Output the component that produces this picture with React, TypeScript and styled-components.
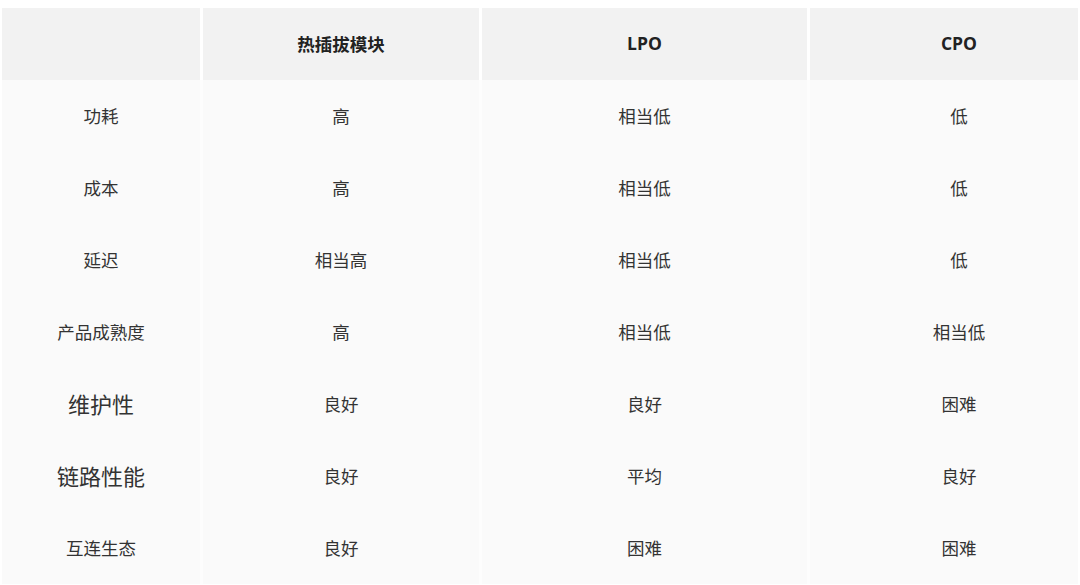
import React from 'react';
import styled, { createGlobalStyle } from 'styled-components';

const GlobalStyle = createGlobalStyle`
  html, body {
    margin: 0;
    padding: 0;
    background: #ffffff;
  }
  body {
    font-family: "Open Sans", "Noto Sans CJK SC", sans-serif;
    color: #333;
  }
`;

const Page = styled.div`
  padding: 8px 4px 0 2px;
`;

const columns = '198px 276px 325px 268px';

const HeaderRow = styled.div`
  display: grid;
  grid-template-columns: ${columns};
  column-gap: 3px;
  background: #ffffff;
`;

// the last column's text sits a bit right of the cell centre in the original
const HeaderCell = styled.div<{ $last?: boolean }>`
  height: 72px;
  box-sizing: border-box;
  padding: 0 0 2px ${(p) => (p.$last ? '30px' : '0')};
  display: flex;
  align-items: center;
  justify-content: center;
  background: #f2f2f2;
  font-size: 17.5px;
  font-weight: 700;
  color: #222;
`;

const Body = styled.div`
  display: grid;
  grid-template-columns: ${columns};
  column-gap: 3px;
  background: #fdfdfd;
`;

const Cell = styled.div<{ $large?: boolean; $last?: boolean }>`
  height: 72px;
  box-sizing: border-box;
  padding: 0 0 2px ${(p) => (p.$last ? '30px' : '0')};
  display: flex;
  align-items: center;
  justify-content: center;
  background: #fafafa;
  font-size: ${(p) => (p.$large ? '22px' : '17.5px')};
  color: #333;
`;

const headers = ['', '热插拔模块', 'LPO', 'CPO'];

const rows: { label: string; large?: boolean; values: string[] }[] = [
  { label: '功耗', values: ['高', '相当低', '低'] },
  { label: '成本', values: ['高', '相当低', '低'] },
  { label: '延迟', values: ['相当高', '相当低', '低'] },
  { label: '产品成熟度', values: ['高', '相当低', '相当低'] },
  { label: '维护性', large: true, values: ['良好', '良好', '困难'] },
  { label: '链路性能', large: true, values: ['良好', '平均', '良好'] },
  { label: '互连生态', values: ['良好', '困难', '困难'] },
];

const App: React.FC = () => (
  <>
    <GlobalStyle />
    <Page>
      <HeaderRow>
        {headers.map((h, i) => (
          <HeaderCell key={i} $last={i === headers.length - 1}>
            {h}
          </HeaderCell>
        ))}
      </HeaderRow>
      <Body>
        {rows.map((r) => (
          <React.Fragment key={r.label}>
            <Cell $large={r.large}>{r.label}</Cell>
            {r.values.map((v, i) => (
              <Cell key={i} $last={i === r.values.length - 1}>
                {v}
              </Cell>
            ))}
          </React.Fragment>
        ))}
      </Body>
    </Page>
  </>
);

export default App;
